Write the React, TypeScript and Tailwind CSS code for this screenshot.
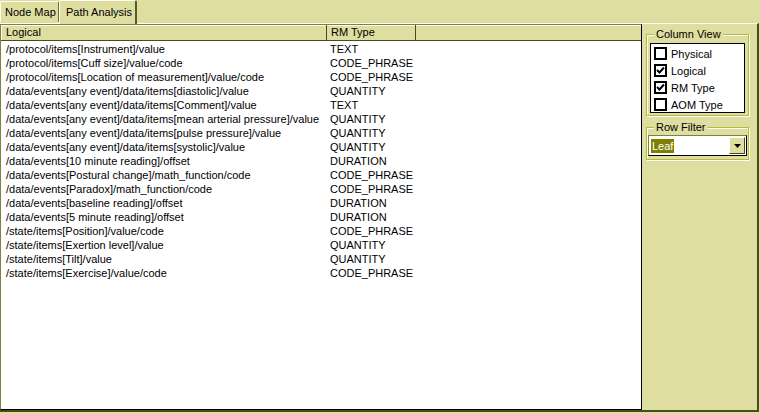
import React from "react";

const rows: [string, string][] = [
  ["/protocol/items[Instrument]/value", "TEXT"],
  ["/protocol/items[Cuff size]/value/code", "CODE_PHRASE"],
  ["/protocol/items[Location of measurement]/value/code", "CODE_PHRASE"],
  ["/data/events[any event]/data/items[diastolic]/value", "QUANTITY"],
  ["/data/events[any event]/data/items[Comment]/value", "TEXT"],
  ["/data/events[any event]/data/items[mean arterial pressure]/value", "QUANTITY"],
  ["/data/events[any event]/data/items[pulse pressure]/value", "QUANTITY"],
  ["/data/events[any event]/data/items[systolic]/value", "QUANTITY"],
  ["/data/events[10 minute reading]/offset", "DURATION"],
  ["/data/events[Postural change]/math_function/code", "CODE_PHRASE"],
  ["/data/events[Paradox]/math_function/code", "CODE_PHRASE"],
  ["/data/events[baseline reading]/offset", "DURATION"],
  ["/data/events[5 minute reading]/offset", "DURATION"],
  ["/state/items[Position]/value/code", "CODE_PHRASE"],
  ["/state/items[Exertion level]/value", "QUANTITY"],
  ["/state/items[Tilt]/value", "QUANTITY"],
  ["/state/items[Exercise]/value/code", "CODE_PHRASE"],
];

const columns = [
  { label: "Physical", checked: false },
  { label: "Logical", checked: true },
  { label: "RM Type", checked: true },
  { label: "AOM Type", checked: false },
];

function CheckBox({ checked }: { checked: boolean }) {
  return (
    <div className="w-[13px] h-[13px] border-2 border-black bg-white flex items-center justify-center">
      {checked && (
        <svg width="9" height="9" viewBox="0 0 9 9">
          <path d="M1 4 L3.5 6.5 L8 1.5" fill="none" stroke="black" strokeWidth="2" />
        </svg>
      )}
    </div>
  );
}

function GroupBox({ title, children, className }: { title: string; children: React.ReactNode; className?: string }) {
  return (
    <div className={"relative border border-[#b8b840] shadow-[inset_1px_1px_0_#fffff0,1px_1px_0_#fffff0] " + (className ?? "")}>
      <div className="absolute -top-[8px] left-[7px] px-[2px] bg-[#dedea0] leading-[14px]">{title}</div>
      {children}
    </div>
  );
}

export default function App() {
  return (
    <div
      className="w-[760px] h-[414px] bg-[#dedea0] text-[11px] text-black flex flex-col overflow-hidden"
      style={{ fontFamily: '"Liberation Sans", Arial, sans-serif' }}
    >
      {/* tabs */}
      <div className="h-[24px] flex items-end relative z-10">
        <div className="h-[21px] w-[59px] shrink-0 pl-[4px] mb-[1px] flex items-center whitespace-nowrap border-t border-l border-[#fffff0] border-r border-r-[#6e6e30] rounded-t-[2px]">
          Node Map
        </div>
        <div className="h-[24px] w-[78px] shrink-0 pl-[6px] -mb-[1px] flex items-center whitespace-nowrap border-t border-l border-[#fffff0] border-r-2 border-r-[#5a5a28] rounded-t-[2px] bg-[#dedea0]">
          Path Analysis
        </div>
      </div>

      {/* panel */}
      <div className="flex-1 flex border-t border-[#fffff0] border-r-2 border-r-[#4a4a20] border-b-2 border-b-[#4a4a20] mr-[1px] mb-[2px]">
        {/* list view */}
        <div className="w-[642px] h-[386px] border border-black border-t-[#808040] border-l-[#808040] bg-white flex flex-col">
          <div className="h-[16px] flex bg-[#dedea0] border-b border-[#4a4a20] shadow-[inset_1px_1px_0_#fffff0]">
            <div className="w-[326px] pl-[5px] leading-[15px] border-r border-[#4a4a20]">Logical</div>
            <div className="w-[89px] pl-[4px] leading-[15px] border-r border-[#4a4a20]">RM Type</div>
          </div>
          <div className="pt-[1px]">
            {rows.map(([p, t]) => (
              <div key={p} className="h-[14px] flex leading-[14px]">
                <div className="w-[326px] pl-[5px] whitespace-nowrap">{p}</div>
                <div className="pl-[3px]">{t}</div>
              </div>
            ))}
          </div>
        </div>

        {/* right side */}
        <div className="flex-1 flex flex-col pl-[4px] pr-[8px] pt-[10px]">
          <GroupBox title="Column View" className="h-[82px] pt-[8px] px-[3px] pb-[3px]">
            <div className="h-[70px] border border-black bg-white pt-[1px] pl-[3px]">
              {columns.map((c) => (
                <div key={c.label} className="h-[17px] flex items-center gap-[4px]">
                  <CheckBox checked={c.checked} />
                  <span className="leading-[14px]">{c.label}</span>
                </div>
              ))}
            </div>
          </GroupBox>
          <GroupBox title="Row Filter" className="mt-[11px] h-[33px] pt-[7px] px-[1px]">
            <div className="h-[21px] border border-black border-t-[#808040] border-l-[#808040] bg-white flex items-center pl-[2px]">
              <span className="bg-[#808000] text-white px-[1px] leading-[14px]">Leaf</span>
              <div className="ml-auto h-[17px] w-[16px] mr-[1px] bg-[#dedea0] border border-[#fffff0] border-r-[#4a4a20] border-b-[#4a4a20] flex items-center justify-center">
                <svg width="7" height="4" viewBox="0 0 7 4">
                  <path d="M0 0 H7 L3.5 4 Z" fill="black" />
                </svg>
              </div>
            </div>
          </GroupBox>
        </div>
      </div>
    </div>
  );
}
